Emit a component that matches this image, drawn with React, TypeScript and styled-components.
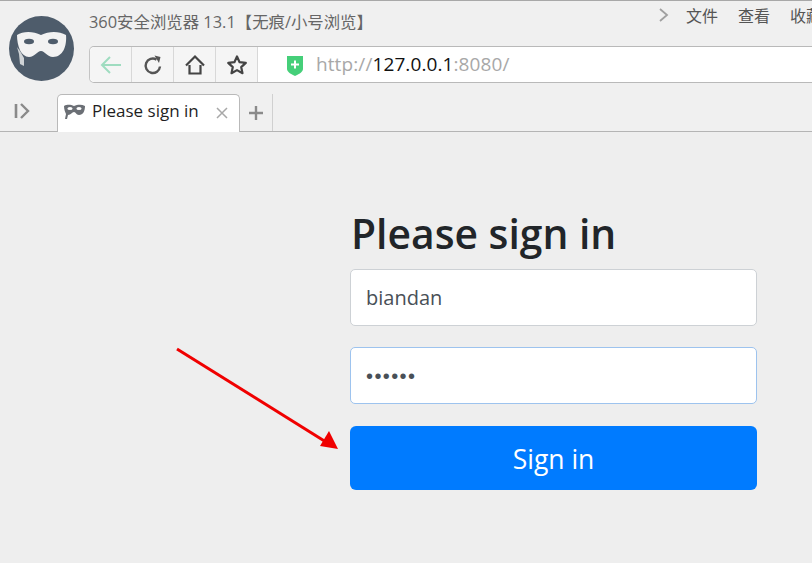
import React from "react";
import styled, { createGlobalStyle } from "styled-components";

const Global = createGlobalStyle`
  html, body { margin: 0; padding: 0; width: 812px; height: 563px; overflow: hidden; background: #eeeeee; }
  * { box-sizing: border-box; }
`;
const UI = `"Open Sans", "Noto Sans CJK SC", sans-serif`;
const Page = styled.div`
  position: relative; width: 812px; height: 563px; overflow: hidden;
  display: flex; flex-direction: column; background: #eeeeee; font-family: ${UI};
`;
const Chrome = styled.header`
  height: 132px; flex: none; background: #f0f0f0;
  border-top: 1px solid #a8a8a8; border-bottom: 1px solid #b4b4b4;
  display: flex; flex-direction: column;
`;
const TopArea = styled.div`
  height: 93px; flex: none; display: flex; padding: 15px 0 0 9px; gap: 15px;
`;
const Avatar = styled.svg`width: 65px; height: 65px; flex: none;`;
const TopColumn = styled.div`flex: 1; min-width: 0; margin-top: -15px; display: flex; flex-direction: column;`;
const TitleRow = styled.div`height: 45px; flex: none; display: flex; justify-content: space-between; white-space: nowrap; overflow: hidden;`;
const WindowTitle = styled.div`
  font-size: 16.4px; line-height: 20px; margin-top: 11px; color: #666666;
  font-family: "Open Sans", "Noto Sans CJK SC", sans-serif;
`;
const Menu = styled.nav`
  display: flex; align-items: center; height: 18px; margin-top: 5px; margin-right: -10px; gap: 20px;
  font-size: 16px; color: #555555; font-family: "Noto Sans CJK SC", sans-serif;
`;
const MenuChevron = styled.svg`width: 12px; height: 16px; margin-right: -4px;`;
const AddressBar = styled.div`
  height: 37px; flex: none; display: flex; align-items: stretch;
  background: #ffffff; border: 1px solid #b9b9b9; border-right: none; border-radius: 5px 0 0 5px;
  border-left-color: #c4c4c4;
`;
const NavButton = styled.div`
  width: 42px; flex: none; display: flex; align-items: center; justify-content: center;
  background: #f5f5f5; border-right: 1px solid #d8d8d8;
  &:first-child { border-radius: 5px 0 0 5px; }
`;
const Shield = styled.svg`width: 18px; height: 22px; margin: 0 0 0 28px; flex: none; align-self: center;`;
const Url = styled.div`
  margin-left: 12px; font-size: 19px; letter-spacing: 0.1px; line-height: 35px; color: #a8a8a8;
  font-family: "Open Sans", sans-serif;
`;
const Host = styled.span`color: #111111;`;
const TabRow = styled.div`flex: 1; display: flex; align-items: flex-end; padding-left: 13px; margin-top: -1px;`;
const SideToggle = styled.svg`width: 18px; height: 18px; margin: 0 26px 11px 0; flex: none;`;
const Tab = styled.div`
  width: 183px; height: 38px; flex: none; display: flex; align-items: center; padding: 0 11px 0 5px;
  background: #ffffff; border: 1px solid #b9b9b9; border-bottom: none; border-radius: 5px 5px 0 0;
  margin-bottom: -1px;
`;
const TabIcon = styled.svg`width: 23px; height: 16px; flex: none; margin: -5px 6px 0 0;`;
const TabLabel = styled.span`flex: 1; font-size: 17px; color: #1f1f1f; white-space: nowrap; margin-top: -6px;`;
const TabClose = styled.svg`width: 12px; height: 12px; flex: none; margin-top: -2px;`;
const NewTab = styled.div`
  width: 33px; height: 37px; flex: none; display: flex; align-items: center; justify-content: center;
  border-right: 1px solid #d0d0d0;
`;
const Main = styled.main`flex: 1; display: flex; justify-content: flex-start; padding-left: 350px;`;
const Form = styled.form`width: 407px; display: flex; flex-direction: column;`;
const Heading = styled.h1`
  margin: 69px 0 4px 1px; height: 64px; font-family: "Open Sans", sans-serif; font-weight: 600; font-size: 40.8px;
  line-height: 64px; color: #212529;
`;
const Field = styled.div<{ $focused?: boolean }>`
  height: 57px; flex: none; display: flex; align-items: center; padding: 0 15px; background: #ffffff;
  border: 1px solid ${(p) => (p.$focused ? "#9dc3ee" : "#cdd1d5")}; border-radius: 5px;
  color: #495057; font-size: 20px; font-family: "Open Sans", sans-serif;
  & + & { margin-top: 21px; }
`;
const Dots = styled.span`font-family: "Liberation Sans", sans-serif; font-size: 20px; letter-spacing: 1.4px; line-height: 1; color: #495057;`;
const Submit = styled.button`
  height: 64px; margin-top: 22px; border: none; border-radius: 6px; background: #007bff; color: #ffffff;
  font-family: "Open Sans", sans-serif; font-size: 26.5px; padding: 2px 0 0 0;
`;
const Annotation = styled.svg`position: absolute; left: 0; top: 0; width: 812px; height: 563px; pointer-events: none;`;

export default function App() {
  return (
    <Page>
      <Global />
      <Chrome>
        <TopArea>
          <Avatar viewBox="0 0 65 65">
            <circle cx="32.5" cy="32.5" r="32.5" fill="#4e5c6b" />
            <path d="M8 31L10 38L11 48L15 50L15 42L11 35z" fill="#cfd3d6" />
            <path d="M8 19C14 15 24 15 32 19C40 15 50 15 57 19C58 30 54 41 44 41C38 41 36 35 32 35C28 35 26 41 20 41C12 41 8 30 8 19z" fill="#f2f2f2" />
            <ellipse cx="20" cy="25.5" rx="5" ry="2.8" fill="#4e5c6b" />
            <ellipse cx="44" cy="25.5" rx="5" ry="2.8" fill="#4e5c6b" />
          </Avatar>
          <TopColumn>
            <TitleRow>
              <WindowTitle>360安全浏览器 13.1【无痕/小号浏览】</WindowTitle>
              <Menu>
                <MenuChevron viewBox="0 0 12 16"><path d="M2 2l7 6-7 6" fill="none" stroke="#a0a0a0" strokeWidth="1.8" /></MenuChevron>
                <span>文件</span><span>查看</span><span>收藏</span>
              </Menu>
            </TitleRow>
            <AddressBar>
              <NavButton>
                <svg width="24" height="22" viewBox="0 0 24 22"><path d="M22 11H3M11 3l-8 8 8 8" fill="none" stroke="#9fdcc0" strokeWidth="2" /></svg>
              </NavButton>
              <NavButton>
                <svg width="22" height="22" viewBox="0 0 22 22"><path d="M18 12.5A7.2 7.2 0 1 1 14.5 5.6" fill="none" stroke="#555" strokeWidth="2.4" /><path d="M12.5 1.5l6 1.5-1.5 6z" fill="#555" /></svg>
              </NavButton>
              <NavButton>
                <svg width="22" height="22" viewBox="0 0 22 22"><path d="M2 11.5L11 2.5l9 9M5.5 11v8.5h11V11" fill="none" stroke="#444" strokeWidth="2.2" /></svg>
              </NavButton>
              <NavButton>
                <svg width="22" height="22" viewBox="0 0 22 22"><path d="M11 2.5l2.6 5.7 6.2.7-4.6 4.2 1.3 6.1L11 16.1l-5.5 3.1 1.3-6.1-4.6-4.2 6.2-.7z" fill="none" stroke="#444" strokeWidth="2.2" strokeLinejoin="round" /></svg>
              </NavButton>
              <Shield viewBox="0 0 18 22">
                <path d="M1 2h16v13c0 3-4 5-8 7-4-2-8-4-8-7z" fill="#45cf79" />
                <path d="M9 6.500v8M5 10.500h8" stroke="#fff" strokeWidth="2" />
              </Shield>
              <Url>http://<Host>127.0.0.1</Host>:8080/</Url>
            </AddressBar>
          </TopColumn>
        </TopArea>
        <TabRow>
          <SideToggle viewBox="0 0 18 18">
            <path d="M3 2v14" stroke="#8a8a8a" strokeWidth="2.6" />
            <path d="M8 2l7 7-7 7" fill="none" stroke="#8a8a8a" strokeWidth="2.4" />
          </SideToggle>
          <Tab>
            <TabIcon viewBox="0 0 23 16">
              <path d="M1 3c4-2 7-1 10 0 3-1 7-2 11 0 0 5-2 9-6 9-3 0-3-3-5-3s-3 3-6 3l-1 4H2l1-5C2 9 1 6 1 3z" fill="#6b6f75" />
              <ellipse cx="7" cy="5.5" rx="2.6" ry="1.6" fill="#fff" />
              <ellipse cx="16" cy="5.5" rx="2.6" ry="1.6" fill="#fff" />
            </TabIcon>
            <TabLabel>Please sign in</TabLabel>
            <TabClose viewBox="0 0 12 12"><path d="M1 1l10 10M11 1L1 11" stroke="#a8a8a8" strokeWidth="1.5" /></TabClose>
          </Tab>
          <NewTab>
            <svg width="14" height="14" viewBox="0 0 14 14"><path d="M7 0v14M0 7h14" stroke="#8a8a8a" strokeWidth="2.4" /></svg>
          </NewTab>
        </TabRow>
      </Chrome>
      <Main>
        <Form>
          <Heading>Please sign in</Heading>
          <Field>biandan</Field>
          <Field $focused><Dots>••••••</Dots></Field>
          <Submit type="button">Sign in</Submit>
        </Form>
      </Main>
      <Annotation viewBox="0 0 812 563">
        <path d="M177 349L326 442" stroke="#f00000" strokeWidth="3" />
        <path d="M338 449L320 446L329 431z" fill="#f00000" />
      </Annotation>
    </Page>
  );
}
